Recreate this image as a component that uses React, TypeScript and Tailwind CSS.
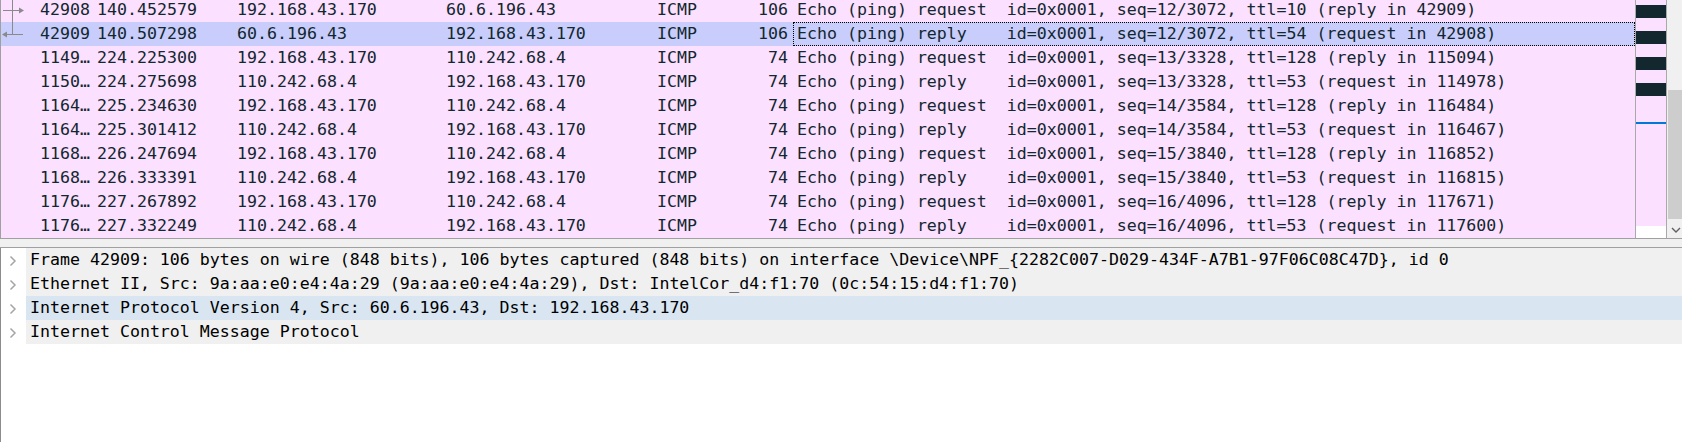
import React from "react";

type Row = {
  no: string;
  time: string;
  src: string;
  dst: string;
  proto: string;
  len: string;
  info: string;
  selected?: boolean;
  ind?: "req" | "rep";
};

const rows: Row[] = [
  { no: "42908", time: "140.452579", src: "192.168.43.170", dst: "60.6.196.43", proto: "ICMP", len: "106", info: "Echo (ping) request  id=0x0001, seq=12/3072, ttl=10 (reply in 42909)", ind: "req" },
  { no: "42909", time: "140.507298", src: "60.6.196.43", dst: "192.168.43.170", proto: "ICMP", len: "106", info: "Echo (ping) reply    id=0x0001, seq=12/3072, ttl=54 (request in 42908)", selected: true, ind: "rep" },
  { no: "1149…", time: "224.225300", src: "192.168.43.170", dst: "110.242.68.4", proto: "ICMP", len: "74", info: "Echo (ping) request  id=0x0001, seq=13/3328, ttl=128 (reply in 115094)" },
  { no: "1150…", time: "224.275698", src: "110.242.68.4", dst: "192.168.43.170", proto: "ICMP", len: "74", info: "Echo (ping) reply    id=0x0001, seq=13/3328, ttl=53 (request in 114978)" },
  { no: "1164…", time: "225.234630", src: "192.168.43.170", dst: "110.242.68.4", proto: "ICMP", len: "74", info: "Echo (ping) request  id=0x0001, seq=14/3584, ttl=128 (reply in 116484)" },
  { no: "1164…", time: "225.301412", src: "110.242.68.4", dst: "192.168.43.170", proto: "ICMP", len: "74", info: "Echo (ping) reply    id=0x0001, seq=14/3584, ttl=53 (request in 116467)" },
  { no: "1168…", time: "226.247694", src: "192.168.43.170", dst: "110.242.68.4", proto: "ICMP", len: "74", info: "Echo (ping) request  id=0x0001, seq=15/3840, ttl=128 (reply in 116852)" },
  { no: "1168…", time: "226.333391", src: "110.242.68.4", dst: "192.168.43.170", proto: "ICMP", len: "74", info: "Echo (ping) reply    id=0x0001, seq=15/3840, ttl=53 (request in 116815)" },
  { no: "1176…", time: "227.267892", src: "192.168.43.170", dst: "110.242.68.4", proto: "ICMP", len: "74", info: "Echo (ping) request  id=0x0001, seq=16/4096, ttl=128 (reply in 117671)" },
  { no: "1176…", time: "227.332249", src: "110.242.68.4", dst: "192.168.43.170", proto: "ICMP", len: "74", info: "Echo (ping) reply    id=0x0001, seq=16/4096, ttl=53 (request in 117600)" },
];

const details = [
  { text: "Frame 42909: 106 bytes on wire (848 bits), 106 bytes captured (848 bits) on interface \\Device\\NPF_{2282C007-D029-434F-A7B1-97F06C08C47D}, id 0" },
  { text: "Ethernet II, Src: 9a:aa:e0:e4:4a:29 (9a:aa:e0:e4:4a:29), Dst: IntelCor_d4:f1:70 (0c:54:15:d4:f1:70)" },
  { text: "Internet Protocol Version 4, Src: 60.6.196.43, Dst: 192.168.43.170", hl: true },
  { text: "Internet Control Message Protocol" },
];

function Indicator({ kind }: { kind?: "req" | "rep" }) {
  if (!kind) return null;
  return (
    <svg width="39" height="24" viewBox="0 0 39 24">
      {kind === "req" ? (
        <g stroke="#8a8a8a" strokeWidth="1" fill="none">
          <line x1="11.5" y1="0" x2="11.5" y2="24" />
          <line x1="2" y1="12.5" x2="19" y2="12.5" />
          <polygon points="18,9.5 23,12.5 18,15.5" fill="#8a8a8a" stroke="none" />
        </g>
      ) : (
        <g stroke="#8a8a8a" strokeWidth="1" fill="none">
          <line x1="11.5" y1="0" x2="11.5" y2="12.5" />
          <line x1="5" y1="12.5" x2="22" y2="12.5" />
          <polygon points="6,9.5 1,12.5 6,15.5" fill="#8a8a8a" stroke="none" />
        </g>
      )}
    </svg>
  );
}

export default function App() {
  return (
    <div
      className="w-[1682px] h-[442px] bg-white overflow-hidden flex flex-col text-[16.6px] leading-[24px]"
      style={{ fontFamily: '"DejaVu Sans Mono", "Liberation Mono", monospace' }}
    >
      {/* Packet list */}
      <div className="h-[239px] flex border-b border-[#a0a0a0] shrink-0">
        <div className="flex-1 border-l border-[#a0a0a0] overflow-hidden bg-[#fce0ff] text-[#12272e]">
          <div className="-mt-[2px]">
            {rows.map((r, i) => (
              <div
                key={i}
                className={`h-[24px] flex items-center whitespace-pre ${r.selected ? "bg-[#c8cdfc]" : ""}`}
              >
                <div className="w-[39px] h-[24px] shrink-0">
                  <Indicator kind={r.ind} />
                </div>
                <div className="w-[57px] shrink-0">{r.no}</div>
                <div className="w-[140px] shrink-0">{r.time}</div>
                <div className="w-[209px] shrink-0">{r.src}</div>
                <div className="w-[211px] shrink-0">{r.dst}</div>
                <div className="w-[90px] shrink-0">{r.proto}</div>
                <div className="w-[41px] shrink-0 text-right">{r.len}</div>
                <div className="w-[5px] shrink-0" />
                <div
                  className={`flex-1 h-[24px] pl-[3px] border border-dotted ${r.selected ? "border-[#000]" : "border-transparent"} leading-[22px]`}
                >
                  {r.info}
                </div>
              </div>
            ))}
          </div>
        </div>
        {/* Minimap */}
        <div className="w-[32px] shrink-0 border-l border-r border-[#a9a9a9] bg-white flex flex-col">
          <svg width="30" height="238" viewBox="0 0 30 238">
            <rect x="0" y="0" width="30" height="226" fill="#fce0ff" />
            <rect x="0" y="5" width="30" height="13" fill="#12272e" />
            <rect x="0" y="31" width="30" height="13" fill="#12272e" />
            <rect x="0" y="57" width="30" height="13" fill="#12272e" />
            <rect x="0" y="83" width="30" height="13" fill="#12272e" />
            <rect x="0" y="122" width="30" height="2" fill="#0078d7" />
          </svg>
        </div>
        {/* Scrollbar */}
        <div className="w-[15px] shrink-0 bg-[#f0f0f0] flex flex-col">
          <div className="h-[90px]" />
          <div className="h-[129px] ml-[1px] bg-[#cdcdcd]" />
          <div className="flex-1 flex items-end justify-center pb-[4px] pl-[2px]">
            <svg width="10" height="7" viewBox="0 0 10 7">
              <polyline points="1,1 5,5 9,1" fill="none" stroke="#606060" strokeWidth="1.4" />
            </svg>
          </div>
        </div>
      </div>
      {/* Splitter */}
      <div className="h-[9px] shrink-0 bg-[#f0f0f0] border-b border-[#a0a0a0]" />
      {/* Details */}
      <div className="flex-1 border-l border-[#8c8c8c] bg-white text-black">
        {details.map((d, i) => (
          <div key={i} className="h-[24px] flex">
            <div className="w-[25px] shrink-0 h-[24px]">
              <svg width="25" height="24" viewBox="0 0 25 24">
                <polyline points="9.5,8.5 14,13 9.5,17.5" fill="none" stroke="#a6a6a6" strokeWidth="1.5" />
              </svg>
            </div>
            <div className={`flex-1 pl-[4px] whitespace-pre ${d.hl ? "bg-[#d9e6f2]" : "bg-[#f0f0f0]"}`}>
              {d.text}
            </div>
          </div>
        ))}
      </div>
    </div>
  );
}
